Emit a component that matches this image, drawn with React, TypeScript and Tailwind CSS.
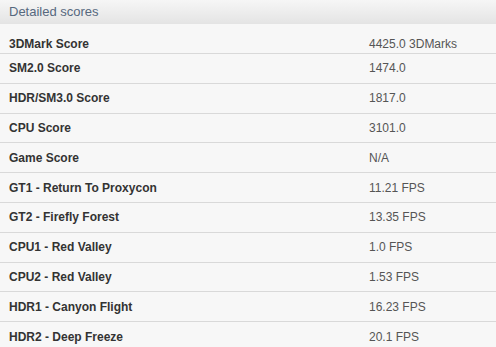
import React from "react";

const rows: [string, string][] = [
  ["3DMark Score", "4425.0 3DMarks"],
  ["SM2.0 Score", "1474.0"],
  ["HDR/SM3.0 Score", "1817.0"],
  ["CPU Score", "3101.0"],
  ["Game Score", "N/A"],
  ["GT1 - Return To Proxycon", "11.21 FPS"],
  ["GT2 - Firefly Forest", "13.35 FPS"],
  ["CPU1 - Red Valley", "1.0 FPS"],
  ["CPU2 - Red Valley", "1.53 FPS"],
  ["HDR1 - Canyon Flight", "16.23 FPS"],
  ["HDR2 - Deep Freeze", "20.1 FPS"],
];

export default function App() {
  return (
    <div
      className="w-[496px] h-[347px] overflow-hidden bg-[#f7f7f7]"
      style={{ fontFamily: '"Liberation Sans", Arial, sans-serif' }}
    >
      <div className="h-[24px] flex items-center pl-[9px] bg-gradient-to-b from-[#f6f6f6] to-[#e4e4e4] text-[13px] text-[#56687e]">
        Detailed scores
      </div>
      {rows.map(([label, value], i) => (
        <div
          key={label}
          className={
            i === 0
              ? "grid grid-cols-[369px_1fr] items-center h-[30px] pt-[10px] border-b border-[#d9d9d9] text-[12px]"
              : "grid grid-cols-[369px_1fr] items-center h-[29.8px] border-b border-[#d9d9d9] text-[12px]"
          }
        >
          <div className="pl-[9px] font-bold text-[#333333]">{label}</div>
          <div className="text-[#555555]">{value}</div>
        </div>
      ))}
    </div>
  );
}
